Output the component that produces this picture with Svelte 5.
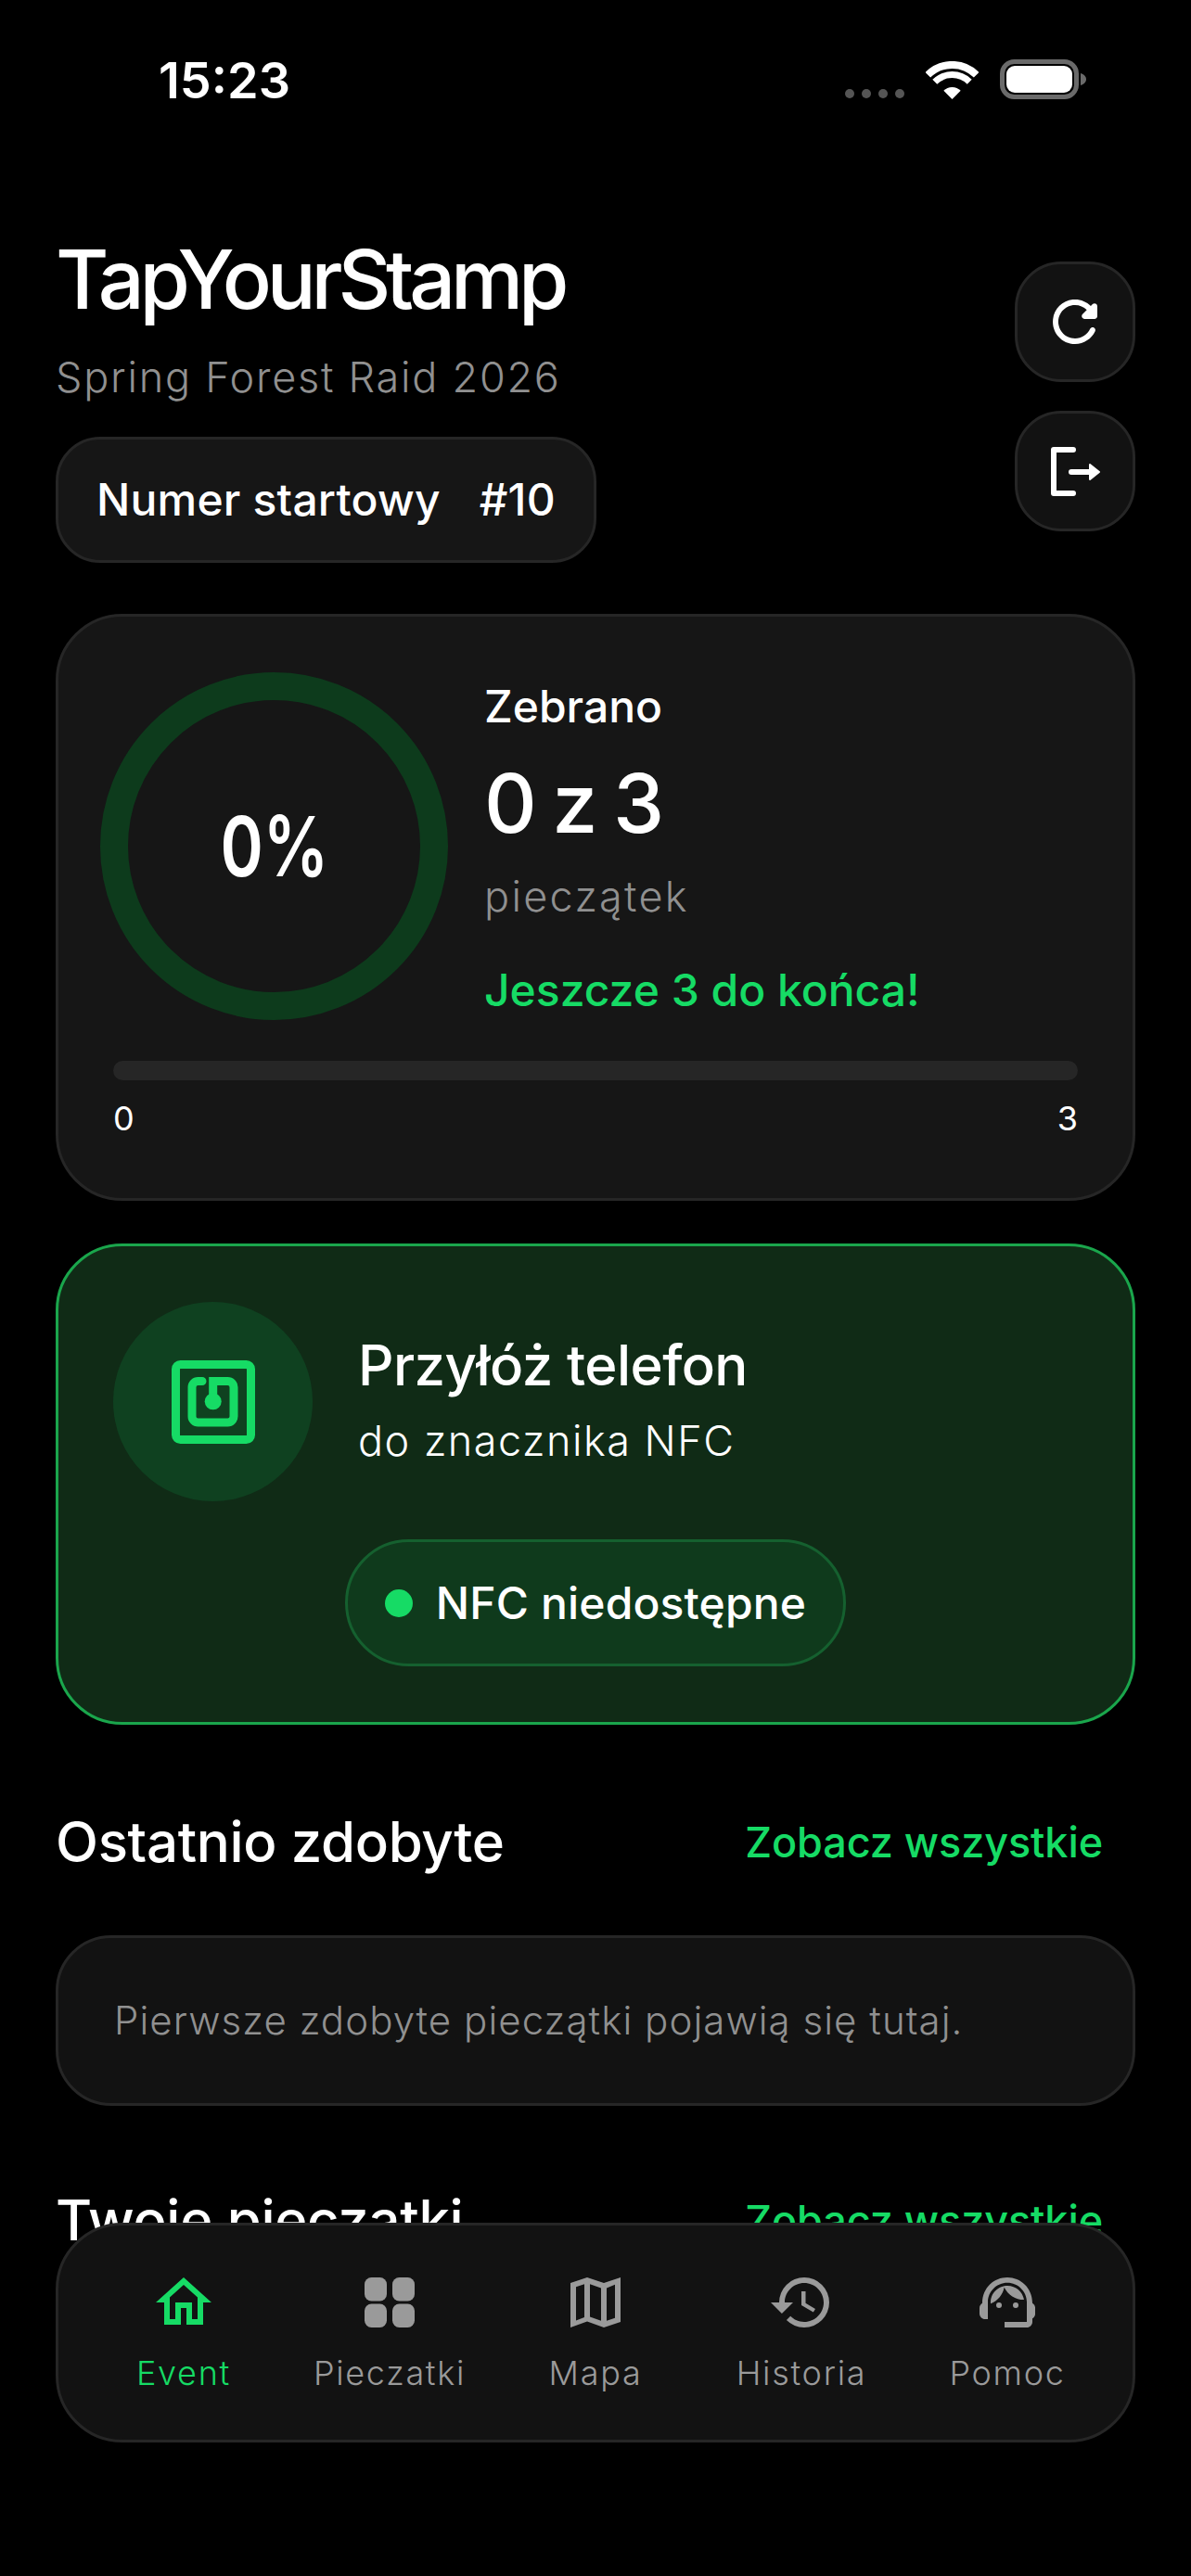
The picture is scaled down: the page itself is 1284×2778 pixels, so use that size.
<script>
  const tabs = [
    { label: "Event", icon: "home", active: true },
    { label: "Pieczatki", icon: "grid" },
    { label: "Mapa", icon: "map" },
    { label: "Historia", icon: "history" },
    { label: "Pomoc", icon: "agent" },
  ];
  const collected = 0;
  const total = 3;
</script>

{#snippet sectionHead(title)}
  <div class="section-head">
    <h2>{title}</h2>
    <span class="see-all">Zobacz wszystkie</span>
  </div>
{/snippet}

<div class="phone">
  <div class="status">
    <span class="time">15:23</span>
    <div class="status-icons">
      <div class="signal"><i></i><i></i><i></i><i></i></div>
      <svg class="wifi" width="57" height="41" viewBox="0 0 57 41">
        <path d="M2.3 14.8a37 37 0 0 1 52.4 0" fill="none" stroke="#fff" stroke-width="8" />
        <path d="M9.8 22.3a26.5 26.5 0 0 1 37.4 0" fill="none" stroke="#fff" stroke-width="7" />
        <path d="M28.5 41l-9.2-9.2a13 13 0 0 1 18.4 0z" fill="#fff" />
      </svg>
      <svg class="battery" width="94" height="43" viewBox="0 0 94 43">
        <rect x="2.5" y="2.5" width="80" height="38" rx="13" fill="none" stroke="#6a6a6a" stroke-width="5" />
        <rect x="7" y="7" width="71" height="29" rx="9" fill="#fff" />
        <path d="M87 15c3.5 1 6 3.5 6 6.5s-2.5 5.5-6 6.5z" fill="#6a6a6a" />
      </svg>
    </div>
  </div>

  <main class="content">
    <header class="top">
      <div class="brand">
        <h1>TapYourStamp</h1>
        <p class="event-name">Spring Forest Raid 2026</p>
        <div class="start-chip"><span>Numer startowy</span><span>#10</span></div>
      </div>
      <div class="actions">
        <button class="round-btn" aria-label="Odśwież">
          <svg width="72" height="72" viewBox="0 0 24 24" fill="#fff">
            <path d="M17.65 6.35c-1.63-1.63-3.94-2.57-6.48-2.31-3.67.37-6.69 3.35-7.1 7.02C3.52 15.91 7.27 20 12 20c3.19 0 5.93-1.87 7.21-4.56.32-.67-.16-1.44-.9-1.44-.37 0-.72.2-.88.53-1.13 2.43-3.84 3.97-6.8 3.31-2.22-.49-4.01-2.3-4.48-4.52C5.31 9.44 8.26 6 12 6c1.66 0 3.14.69 4.22 1.78l-1.51 1.51c-.63.63-.19 1.71.7 1.71H19c.55 0 1-.45 1-1V6.41c0-.89-1.08-1.34-1.71-.71l-.64.65z" />
          </svg>
        </button>
        <button class="round-btn" aria-label="Wyloguj">
          <svg width="72" height="72" viewBox="0 0 72 72" fill="none" stroke="#fff" stroke-width="6" stroke-linecap="round" stroke-linejoin="round">
            <path d="M34 13H13v47h21" />
            <path d="M32 37h21" />
            <path d="M52 29l10 8-10 8z" fill="#fff" stroke-width="2" />
          </svg>
        </button>
      </div>
    </header>

    <section class="card progress-card">
      <div class="progress-top">
        <div class="ring">
          <svg width="375" height="375" viewBox="0 0 375 375">
            <circle cx="187.5" cy="187.5" r="172.5" fill="none" stroke="#0d3b1c" stroke-width="30" />
          </svg>
          <span class="ring-label"><span>0%</span></span>
        </div>
        <div class="stats">
          <div class="stats-label">Zebrano</div>
          <div class="stats-value">{collected} z {total}</div>
          <div class="stats-unit">pieczątek</div>
          <div class="stats-left">Jeszcze {total - collected} do końca!</div>
        </div>
      </div>
      <div class="bar"><div class="bar-fill" style="width:{(collected / total) * 100}%"></div></div>
      <div class="bar-labels"><span>{collected}</span><span>{total}</span></div>
    </section>

    <section class="nfc-card">
      <div class="nfc-row">
        <div class="nfc-badge">
          <svg width="90" height="90" viewBox="0 0 90 90" fill="none" stroke="#16db65" stroke-width="9">
            <rect x="4.5" y="4.5" width="81" height="81" rx="5" />
            <path d="M33 22.5h-4.5a6.5 6.5 0 0 0-6.5 6.5v31.5a6.5 6.5 0 0 0 6.5 6.5h32a6.5 6.5 0 0 0 6.5-6.5V29a6.5 6.5 0 0 0-6.5-6.5H44.7V44" stroke-linecap="round" />
            <circle cx="44.7" cy="44.3" r="9" fill="#16db65" stroke="none" />
          </svg>
        </div>
        <div class="nfc-text">
          <div class="nfc-title">Przyłóż telefon</div>
          <div class="nfc-sub">do znacznika NFC</div>
        </div>
      </div>
      <div class="nfc-pill"><i class="dot"></i>NFC niedostępne</div>
    </section>

    {@render sectionHead("Ostatnio zdobyte")}
    <div class="empty">Pierwsze zdobyte pieczątki pojawią się tutaj.</div>

    <div class="next-section">
      {@render sectionHead("Twoje pieczątki")}
    </div>
  </main>

  <nav class="tabbar">
    {#each tabs as tab}
      <div class="tab" class:active={tab.active}>
        <svg width="72" height="72" viewBox="0 0 24 24" fill="currentColor">
          {#if tab.icon === "home"}
            <path d="M12 5.69l5 4.5V18h-2v-6H9v6H7v-7.81l5-4.5M12 3L2 12h3v8h6v-6h2v6h6v-8h3L12 3z" />
          {:else if tab.icon === "grid"}
            <rect x="3" y="3" width="8" height="8.5" rx="2.5" />
            <rect x="13" y="3" width="8" height="8.5" rx="2.5" />
            <rect x="3" y="12.5" width="8" height="8.5" rx="2.5" />
            <rect x="13" y="12.5" width="8" height="8.5" rx="2.5" />
          {:else if tab.icon === "map"}
            <path fill-rule="evenodd" d="M21 3l-6 2-6-2-6 2v16l6-2.2 6 2.2 6-2V3z M10 5.4l4 1.4v11.8l-4-1.4V5.4z M5 6.4l3-1v11.9l-3 1.2V6.4z M19 17.6l-3 1V6.8l3-1.2v12z" />
          {:else if tab.icon === "history"}
            <path d="M13 3a9 9 0 0 0-9 9H1l3.89 3.89.07.14L9 12H6c0-3.87 3.13-7 7-7s7 3.13 7 7-3.13 7-7 7c-1.93 0-3.68-.79-4.94-2.06l-1.42 1.42A8.954 8.954 0 0 0 13 21a9 9 0 0 0 0-18zm-1 5v5l4.28 2.54.72-1.21-3.5-2.08V8H12z" />
          {:else}
            <path d="M21 12.22C21 6.73 16.74 3 12 3c-4.69 0-9 3.65-9 9.28-.6.34-1 .98-1 1.72v2c0 1.1.9 2 2 2h1v-6.1c0-3.87 3.13-7 7-7s7 3.13 7 7V19h-8v2h8c1.1 0 2-.9 2-2v-1.22c.59-.31 1-.92 1-1.62v-2.3c0-.67-.41-1.28-1-1.64z" />
            <circle cx="9" cy="13" r="1" />
            <circle cx="15" cy="13" r="1" />
            <path d="M18 11.03C17.52 8.18 15.04 6 12.05 6c-3.03 0-6.29 2.51-6.03 6.45 2.47-1.01 4.33-3.21 4.86-5.89 1.31 2.63 4 4.44 7.12 4.47z" />
          {/if}
        </svg>
        <span>{tab.label}</span>
      </div>
    {/each}
  </nav>
</div>

<style>
  :global(body) {
    margin: 0;
    background: #000;
  }
  .phone {
    position: relative;
    width: 1284px;
    height: 2778px;
    overflow: hidden;
    background: #000;
    color: #fff;
    font-family: Inter, "Noto Sans", sans-serif;
  }

  /* status bar */
  .status {
    display: flex;
    justify-content: space-between;
    align-items: flex-start;
    height: 251px;
    box-sizing: border-box;
    padding: 56px 112px 0 171px;
  }
  .time {
    font-size: 54px;
    line-height: 62px;
    font-weight: 600;
  }
  .status-icons {
    display: flex;
    align-items: flex-end;
    padding-top: 8px;
  }
  .signal {
    display: flex;
    gap: 8px;
    margin-right: 23px;
    margin-bottom: 1px;
  }
  .signal i {
    width: 10px;
    height: 10px;
    border-radius: 50%;
    background: #555;
  }
  .wifi {
    margin-right: 23px;
  }

  .content {
    padding: 0 60px;
  }
  .top {
    display: flex;
    justify-content: space-between;
    align-items: flex-start;
  }
  h1 {
    margin: 0;
    font-size: 88px;
    line-height: 100px;
    font-weight: 500;
    letter-spacing: -5.2px;
  }
  .event-name {
    margin: 26px 0 0;
    font-size: 45px;
    line-height: 60px;
    font-weight: 350;
    letter-spacing: 1.75px;
    color: #909090;
  }
  .start-chip {
    display: inline-flex;
    gap: 42px;
    margin-top: 34px;
    padding: 35px 41px;
    background: #161616;
    border: 3px solid #262626;
    border-radius: 48px;
    font-size: 48px;
    line-height: 60px;
    font-weight: 500;
    letter-spacing: 0.2px;
  }
  .actions {
    display: flex;
    flex-direction: column;
    gap: 31px;
    padding-top: 31px;
  }
  .round-btn {
    display: flex;
    align-items: center;
    justify-content: center;
    box-sizing: border-box;
    width: 130px;
    height: 130px;
    padding: 0;
    background: #121212;
    border: 3px solid #262626;
    border-radius: 50px;
  }

  /* collected card */
  .card {
    box-sizing: border-box;
    background: #161616;
    border: 3px solid #262626;
    border-radius: 72px;
  }
  .progress-card {
    margin-top: 55px;
    padding: 60px 59px 62px;
  }
  .progress-top {
    display: flex;
    gap: 39px;
    margin-left: -14px;
  }
  .ring {
    position: relative;
    width: 375px;
    height: 375px;
    flex: none;
  }
  .ring svg {
    display: block;
  }
  .ring-label {
    position: absolute;
    inset: 0;
    display: flex;
    align-items: center;
    justify-content: center;
    font-size: 90px;
    font-weight: 600;
  }
  .ring-label span {
    display: block;
    transform: scaleX(0.78);
  }
  .stats {
    padding-top: 7px;
  }
  .stats-label {
    font-size: 48px;
    line-height: 60px;
    font-weight: 500;
  }
  .stats-value {
    margin-top: 24px;
    font-size: 88px;
    line-height: 100px;
    font-weight: 500;
    letter-spacing: -3.5px;
  }
  .stats-unit {
    margin-top: 21px;
    font-size: 45px;
    line-height: 60px;
    font-weight: 350;
    letter-spacing: 2.3px;
    color: #909090;
  }
  .stats-left {
    margin-top: 41px;
    font-size: 48px;
    line-height: 60px;
    font-weight: 500;
    color: #16db65;
  }
  .bar {
    margin-top: 44px;
    height: 21px;
    border-radius: 11px;
    background: #262626;
    overflow: hidden;
  }
  .bar-fill {
    height: 100%;
    background: #16db65;
  }
  .bar-labels {
    display: flex;
    justify-content: space-between;
    margin-top: 17px;
    font-size: 36px;
    line-height: 48px;
  }

  /* nfc card */
  .nfc-card {
    display: flex;
    flex-direction: column;
    align-items: center;
    margin-top: 46px;
    padding: 60px 59px 60px;
    background: #102b16;
    border: 3px solid #1aa64c;
    border-radius: 72px;
  }
  .nfc-row {
    display: flex;
    align-items: center;
    gap: 49px;
    align-self: stretch;
  }
  .nfc-badge {
    display: flex;
    align-items: center;
    justify-content: center;
    width: 215px;
    height: 215px;
    flex: none;
    border-radius: 50%;
    background: #0f4120;
  }
  .nfc-text {
    padding-bottom: 6px;
  }
  .nfc-title {
    font-size: 60px;
    line-height: 76px;
    font-weight: 500;
    letter-spacing: -0.6px;
  }
  .nfc-sub {
    margin-top: 14px;
    font-size: 45px;
    line-height: 60px;
    font-weight: 350;
    letter-spacing: 1.5px;
  }
  .nfc-pill {
    display: flex;
    align-items: center;
    gap: 25px;
    margin-top: 41px;
    padding: 35px 40px;
    background: #0f3a1c;
    border: 3px solid #15602f;
    border-radius: 69px;
    font-size: 48px;
    line-height: 61px;
    font-weight: 500;
    letter-spacing: 0.15px;
  }
  .dot {
    width: 30px;
    height: 30px;
    border-radius: 50%;
    background: #16db65;
  }

  /* sections */
  .section-head {
    display: flex;
    justify-content: space-between;
    align-items: center;
    margin-top: 88px;
    padding-right: 35px;
  }
  h2 {
    margin: 0;
    font-size: 60px;
    line-height: 76px;
    font-weight: 500;
    letter-spacing: -0.35px;
  }
  .see-all {
    font-size: 45px;
    font-weight: 500;
    letter-spacing: -0.1px;
    color: #16db65;
  }
  .empty {
    margin-top: 63px;
    padding: 60px;
    background: #121212;
    border: 3px solid #262626;
    border-radius: 60px;
    font-size: 42px;
    line-height: 58px;
    font-weight: 350;
    letter-spacing: 1.05px;
    color: #909090;
  }
  .next-section {
    margin-top: -3px;
  }

  /* bottom tabs */
  .tabbar {
    position: absolute;
    left: 60px;
    right: 60px;
    bottom: 144px;
    box-sizing: border-box;
    display: grid;
    grid-template-columns: repeat(5, 1fr);
    height: 237px;
    padding: 47px 24px 0;
    background: #121212;
    border: 3px solid #262626;
    border-radius: 72px;
  }
  .tab {
    display: flex;
    flex-direction: column;
    align-items: center;
    gap: 16px;
    color: #9a9a9a;
  }
  .tab.active {
    color: #16db65;
  }
  .tab svg {
    display: block;
  }
  .tab span {
    font-size: 36px;
    line-height: 48px;
    font-weight: 350;
    letter-spacing: 1.7px;
  }
</style>
